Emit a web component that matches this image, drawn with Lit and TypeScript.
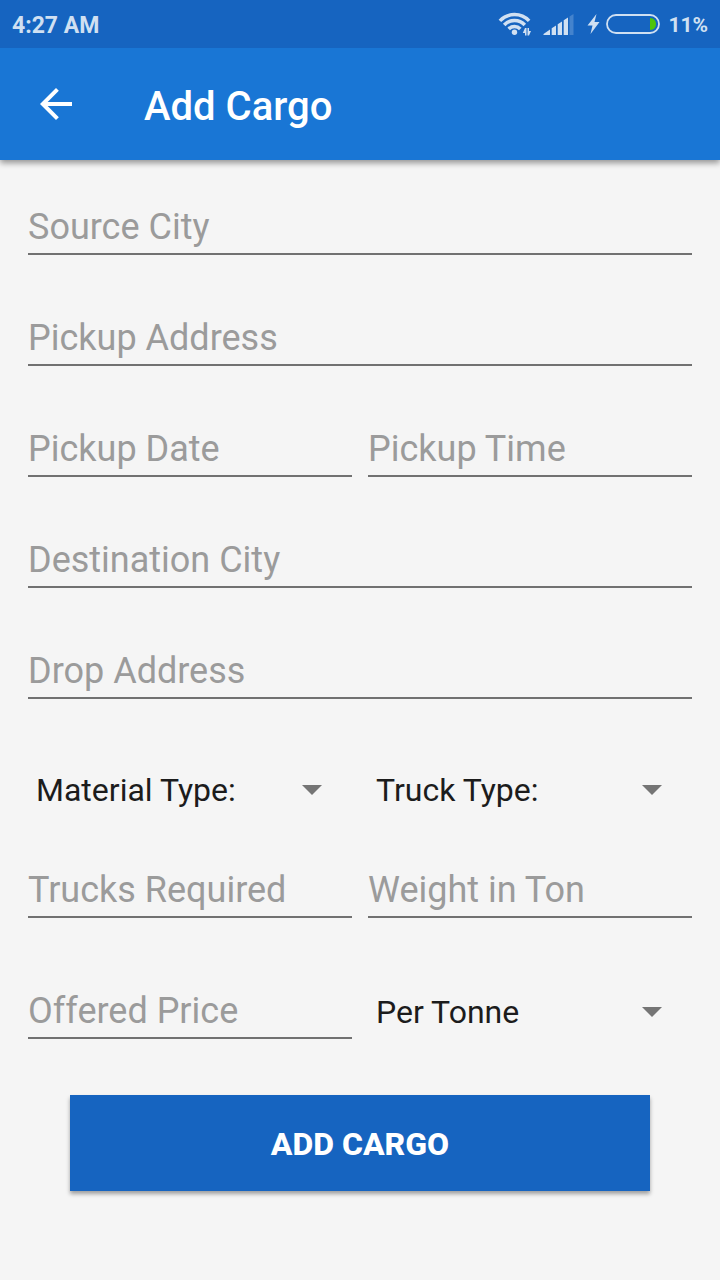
import { LitElement, html, css } from "lit";
import { customElement } from "lit/decorators.js";

@customElement("app-root")
export class AppRoot extends LitElement {
  static styles = css`
    :host {
      display: block;
      min-height: 100vh;
      background: #f5f5f5;
      color: #1c1c1c;
      font-family: Roboto, sans-serif;
    }
    * { box-sizing: border-box; }
    .status {
      position: relative;
      z-index: 1;
      height: 48px;
      padding: 2px 12px 0;
      display: flex;
      align-items: center;
      justify-content: space-between;
      background: #1664c0;
      color: #d0e0f2;
      font-size: 23px;
      font-weight: 700;
    }
    .indicators { display: flex; align-items: center; font-size: 21px; }
    .indicators svg { display: block; margin-right: 8px; }
    .bar {
      height: 112px;
      padding: 0 32px;
      display: flex;
      align-items: center;
      gap: 64px;
      background: #1976d5;
      color: #fff;
      box-shadow: 0 3px 6px rgba(0, 0, 0, 0.4);
    }
    .back { width: 48px; height: 48px; padding: 0; border: 0; background: none; color: inherit; }
    .back svg { display: block; }
    h1 { margin: 0; padding-top: 6px; font-size: 40px; line-height: 48px; font-weight: 500; }
    form { padding: 40px 28px; }
    .row { display: grid; grid-template-columns: 1fr 1fr; column-gap: 16px; margin-bottom: 56px; }
    .wide { grid-template-columns: 1fr; }
    .types { padding-top: 11px; margin-bottom: 49px; }
    .load { margin-bottom: 66px; }
    .field {
      width: 100%;
      min-width: 0;
      height: 55px;
      padding: 0;
      border: 0;
      border-bottom: 2px solid #717171;
      border-radius: 0;
      background: none;
      color: inherit;
      font: 36px Roboto, sans-serif;
      outline: none;
    }
    .field::placeholder { color: #9b9b9b; opacity: 1; }
    .picker { display: grid; align-items: center; }
    .picker > * { grid-area: 1 / 1; }
    .picker svg { justify-self: end; margin-right: 30px; pointer-events: none; }
    select {
      width: 100%;
      height: 48px;
      padding: 0 56px 0 8px;
      border: 0;
      background: none;
      appearance: none;
      color: inherit;
      font: 32px Roboto, sans-serif;
    }
    .submit {
      display: block;
      width: calc(100% - 84px);
      height: 96px;
      margin: 0 auto;
      padding: 2px 0 0;
      border: 0;
      background: #1664c0;
      color: #fff;
      font: 800 32px Roboto, sans-serif;
      box-shadow: 0 3px 4px rgba(0, 0, 0, 0.35);
    }
  `;

  private field(label: string) {
    return html`<input class="field" placeholder=${label} aria-label=${label} />`;
  }

  private picker(name: string, value: string) {
    return html`<div class="picker">
      <select aria-label=${name}><option>${value}</option></select>
      <svg width="20" height="10" viewBox="0 0 20 10"><path d="M0 0h20L10 10z" fill="#757575" /></svg>
    </div>`;
  }

  render() {
    return html`
      <div class="status">
        <span>4:27 AM</span>
        <span class="indicators">
          <svg width="162" height="26" viewBox="498 12 162 26" fill="currentColor" aria-hidden="true">
            <g fill="none" stroke="currentColor" stroke-width="3.5">
              <path d="M499.900 20.900a20 20 0 0 1 29.200 0" />
              <path d="M504.200 25a14 14 0 0 1 20.600 0" />
              <path d="M508.700 29a8 8 0 0 1 11.600 0" />
            </g>
            <circle cx="514.500" cy="32.300" r="2.700" />
            <path d="M525 28h1.500v7.500H525v-2.500h-2.200zM527.500 28h1.500v3l2 0-2 4.500h-1.500z" />
            <path d="M543.500 35v-1l6.500-4.500V35zM551.700 35v-6.700l4.300-2.800V35zM557.700 35V24.300l4.300-2.800V35zM563.700 35V20.300l4.300-2.800V35z" />
            <path opacity=".25" d="M569.500 35V16.500l4-2.500v21z" />
            <path d="M596.500 14l-9 11.500h5L590.500 34l9-12h-5z" />
            <rect x="607" y="15" width="52" height="18" rx="9" fill="none" stroke="currentColor" stroke-width="1.800" />
            <path fill="#4fc40a" d="M650 18c4 0 6 3 6 6s-2 6-6 6z" />
          </svg>
          11%
        </span>
      </div>
      <header class="bar">
        <button class="back" aria-label="Back">
          <svg width="48" height="48" viewBox="0 0 24 24"><path fill="currentColor" d="M20 11H7.83l5.59-5.59L12 4l-8 8 8 8 1.41-1.41L7.83 13H20v-2z" /></svg>
        </button>
        <h1>Add Cargo</h1>
      </header>
      <form>
        <div class="row wide">${this.field("Source City")}</div>
        <div class="row wide">${this.field("Pickup Address")}</div>
        <div class="row">${this.field("Pickup Date")}${this.field("Pickup Time")}</div>
        <div class="row wide">${this.field("Destination City")}</div>
        <div class="row wide">${this.field("Drop Address")}</div>
        <div class="row types">${this.picker("Material type", "Material Type:")}${this.picker("Truck type", "Truck Type:")}</div>
        <div class="row load">${this.field("Trucks Required")}${this.field("Weight in Ton")}</div>
        <div class="row">${this.field("Offered Price")}${this.picker("Price unit", "Per Tonne")}</div>
        <button class="submit" type="button">ADD CARGO</button>
      </form>
    `;
  }
}
